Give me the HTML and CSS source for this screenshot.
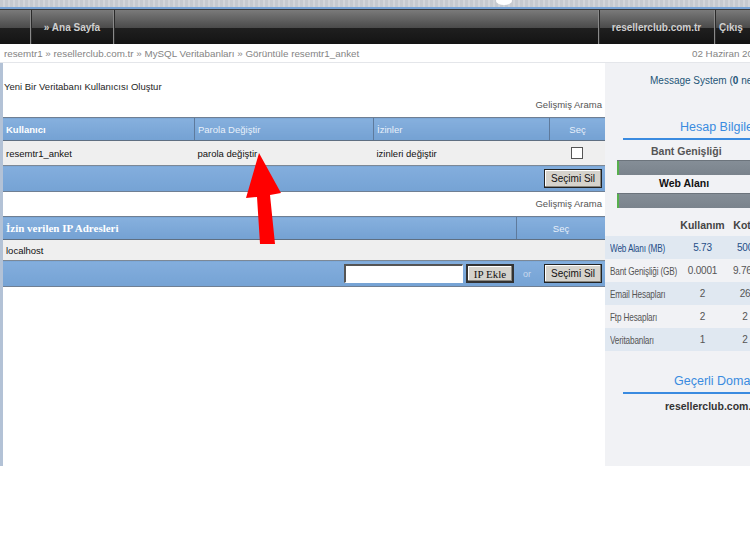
FILE: index.html
```html
<!DOCTYPE html>
<html lang="tr">
<head>
    <meta charset="UTF-8">
    <meta name="viewport" content="width=device-width, initial-scale=1.0">
    <title>Veritabanı Kullanıcısı</title>
    <link rel="stylesheet" href="styles.css">
</head>
<body>
<div class="page">

    <div class="topstrip"><span class="logo-blob"></span></div>

    <div class="navbar">
        <div class="nav-cell nav-empty"></div>
        <div class="nav-cell nav-home">&raquo; Ana Sayfa</div>
        <div class="nav-cell nav-fill"></div>
        <div class="nav-cell nav-site">resellerclub.com.tr</div>
        <div class="nav-cell nav-exit">Çıkış</div>
    </div>

    <div class="crumbs">
        <span>resemtr1 &raquo; resellerclub.com.tr &raquo; MySQL Veritabanları &raquo; Görüntüle resemtr1_anket</span>
        <span class="date">02 Haziran 2012</span>
    </div>

    <div class="main">
        <!-- Sol taraf: kullanıcı ve IP tabloları -->
        <div class="content">
            <div class="create-link">Yeni Bir Veritabanı Kullanıcısı Oluştur</div>
            <div class="search-link">Gelişmiş Arama</div>

            <table class="list">
                <tr class="head">
                    <th class="c-user strong">Kullanıcı</th>
                    <th class="c-pass">Parola Değiştir</th>
                    <th class="c-perm">İzinler</th>
                    <th class="c-sel">Seç</th>
                </tr>
                <tr class="row">
                    <td>resemtr1_anket</td>
                    <td>parola değiştir</td>
                    <td>izinleri değiştir</td>
                    <td class="center"><span class="checkbox"></span></td>
                </tr>
                <tr class="foot">
                    <td colspan="4" class="right"><button class="btn">Seçimi Sil</button></td>
                </tr>
            </table>

            <div class="search-link">Gelişmiş Arama</div>

            <table class="list">
                <tr class="head">
                    <th class="c-ip serif">İzin verilen IP Adresleri</th>
                    <th class="c-sel">Seç</th>
                </tr>
                <tr class="row short">
                    <td colspan="2">localhost</td>
                </tr>
                <tr class="foot">
                    <td colspan="2" class="right">
                        <div class="ip-form">
                            <input type="text" class="ip-input">
                            <button class="btn btn-serif">IP Ekle</button>
                            <span class="or">or</span>
                            <button class="btn">Seçimi Sil</button>
                        </div>
                    </td>
                </tr>
            </table>
        </div>

        <!-- Sağ taraf: hesap bilgileri -->
        <div class="side">
            <div class="msg">Message System (<b>0</b> new messages)</div>

            <div class="side-title">Hesap Bilgileri</div>
            <div class="bar-label">Bant Genişliği</div>
            <div class="bar"><span class="bar-fill"></span></div>
            <div class="bar-label dark">Web Alanı</div>
            <div class="bar second"><span class="bar-fill"></span></div>

            <table class="usage">
                <tr class="usage-head">
                    <th class="u-label"></th>
                    <th class="u-used">Kullanım</th>
                    <th class="u-quota">Kota</th>
                </tr>
                <tr class="alt first">
                    <td><span class="narrow">Web Alanı (MB)</span></td>
                    <td>5.73</td>
                    <td>500</td>
                </tr>
                <tr>
                    <td><span class="narrow">Bant Genişliği (GB)</span></td>
                    <td>0.0001</td>
                    <td>9.765</td>
                </tr>
                <tr class="alt">
                    <td><span class="narrow">Email Hesapları</span></td>
                    <td>2</td>
                    <td>26</td>
                </tr>
                <tr>
                    <td><span class="narrow">Ftp Hesapları</span></td>
                    <td>2</td>
                    <td>2</td>
                </tr>
                <tr class="alt">
                    <td><span class="narrow">Veritabanları</span></td>
                    <td>1</td>
                    <td>2</td>
                </tr>
            </table>

            <div class="side-title domains">Geçerli Domainler</div>
            <div class="domain">resellerclub.com.tr</div>
        </div>
    </div>

    <svg class="arrow" width="50" height="100" viewBox="0 0 50 100">
        <polygon points="19,3 41,43 30,45 35,94 20,94 17,47 6,48" fill="#ff0000"/>
    </svg>

</div>
</body>
</html>
```

FILE: styles.css
```css
body {
    margin: 0;
    width: 750px;
    height: 545px;
    overflow: hidden;
    background-color: #ffffff;
    font-family: 'Liberation Sans', Arial, sans-serif;
    font-size: 9.5px;
    color: #1e1e1e;
}

.page {
    position: relative;
    width: 800px;
}

.topstrip {
    position: relative;
    height: 7px;
    background: repeating-linear-gradient(90deg, #c6cad0 0, #c6cad0 3px, #d2d5da 3px, #d2d5da 5px);
    border-bottom: 2px solid #77a3d6;
}

.logo-blob {
    position: absolute;
    left: 496px;
    top: -3px;
    width: 16px;
    height: 8px;
    border-radius: 50%;
    background-color: #ffffff;
}

.navbar {
    display: flex;
    height: 34px;
    border-top: 1px solid #3b3b3b;
    background: linear-gradient(#7a7a7a, #4b4b4b 52%, #1f1f1f 54%, #141414);
}

.nav-cell {
    display: flex;
    align-items: center;
    justify-content: center;
    border-right: 1px solid #8a8a8a;
    box-shadow: 1px 0 0 #2a2a2a;
    font-size: 10px;
    font-weight: bold;
    color: #cfcfcf;
}

.nav-empty { width: 30px; }
.nav-home { width: 82px; }
.nav-fill { width: 484px; }
.nav-site { width: 115px; }
.nav-exit { flex: 1; justify-content: flex-start; padding-left: 4px; border-right: none; box-shadow: none; }

.crumbs {
    display: flex;
    justify-content: space-between;
    align-items: center;
    height: 18px;
    padding: 0 0 0 4px;
    border-bottom: 1px solid #e4e6ea;
    color: #848484;
    font-size: 9.8px;
    white-space: nowrap;
}

.crumbs .date {
    width: 108px;
}

.main {
    display: flex;
    height: 403px;
}

.content {
    width: 603px;
    border-left: 3px solid #b3c2d6;
}

.create-link {
    padding: 18px 0 0 1px;
    height: 12px;
    line-height: 12px;
}

.search-link {
    text-align: right;
    padding: 6px 3px 0 0;
    margin-bottom: 6px;
    height: 12px;
    line-height: 12px;
    color: #555555;
}

table.list {
    width: 602px;
    table-layout: fixed;
    border-collapse: collapse;
}

.list th, .list td {
    padding: 0 0 0 3px;
    text-align: left;
    white-space: nowrap;
}

.list .head th {
    height: 22px;
    background: linear-gradient(#86b0de, #74a1d3);
    border-top: 1px solid #6f7f93;
    border-bottom: 1px solid #5f6f82;
    border-left: 1px solid #5e7a9c;
    color: #e8f0fa;
    font-weight: normal;
}

.list .head th:first-child {
    border-left: none;
}

.list .head th.strong {
    font-weight: bold;
    color: #ffffff;
}

.list .head th.serif {
    font-family: 'Liberation Serif', 'Times New Roman', serif;
    font-size: 11px;
    font-weight: bold;
    color: #ffffff;
}

.c-user { width: 188px; }
.c-pass { width: 175px; }
.c-perm { width: 172px; }
.c-ip { width: 510px; }
.list .head th.c-sel { text-align: center; padding: 0; }

.list .row td {
    height: 24px;
    background-color: #efefef;
    border-bottom: 1px solid #7c8896;
    color: #111111;
}

.list .row.short td {
    height: 20px;
}

.list .foot td {
    height: 25px;
    background: linear-gradient(#83aedd, #75a2d4);
    border-bottom: 1px solid #6f7f93;
    padding-right: 3px;
}

.list td.center { text-align: center; padding: 0; }
.list td.right { text-align: right; }

.checkbox {
    display: inline-block;
    width: 10px;
    height: 10px;
    border: 1px solid #555555;
    background-color: #ffffff;
    vertical-align: middle;
}

.btn {
    height: 19px;
    padding: 0 6px;
    background-color: #d6d3cc;
    border: 1px solid #222222;
    box-shadow: inset -1px -1px 0 #8a877f, inset 1px 1px 0 #ffffff;
    font-family: 'Liberation Sans', Arial, sans-serif;
    font-size: 10px;
    color: #111111;
    vertical-align: middle;
}

.btn-serif {
    font-family: 'Liberation Serif', 'Times New Roman', serif;
    font-size: 11px;
    font-weight: normal;
    padding: 0 6px;
    border: 2px solid #333333;
}

.ip-form {
    display: flex;
    justify-content: flex-end;
    align-items: center;
    gap: 3px;
}

.ip-input {
    width: 114px;
    height: 14px;
    padding: 1px;
    border: 1px solid #ffffff;
    border-top: 2px solid #555555;
    border-left: 2px solid #555555;
    background-color: #ffffff;
}

.or {
    color: #c9daee;
    margin: 0 10px 0 6px;
    font-size: 9px;
}

.side {
    flex: 1;
    background-color: #f1f2f5;
    padding-top: 12px;
    white-space: nowrap;
}

.msg {
    padding-left: 45px;
    color: #245577;
    font-size: 10px;
    height: 14px;
}

.side-title {
    margin: 31px 0 0 18px;
    padding: 0 0 4px 57px;
    border-bottom: 2px solid #3a8be0;
    color: #3a8be0;
    font-size: 12.5px;
}

.bar-label {
    padding: 5px 0 0 46px;
    height: 12px;
    color: #555555;
    font-weight: bold;
    font-size: 10.5px;
}

.bar-label.dark {
    padding: 2px 0 0 54px;
    height: 14px;
    color: #111111;
}

.bar {
    height: 14px;
    margin: 3px 0 0 12px;
    background: linear-gradient(#858e97, #7a838c);
    border-top: 1px solid #6c747c;
}

.bar.second {
    margin-top: 2px;
}

.bar-fill {
    display: block;
    width: 2px;
    height: 14px;
    background-color: #57b04d;
}

table.usage {
    width: 160px;
    margin-top: 6px;
    table-layout: fixed;
    border-collapse: collapse;
}

.u-label { width: 75px; }
.u-used { width: 45px; }
.u-quota { width: 40px; }

.usage th {
    height: 22px;
    padding: 0;
    font-size: 10.5px;
    color: #444444;
    text-align: center;
}

.usage td {
    height: 23px;
    padding: 0;
    color: #555555;
    font-size: 10px;
    letter-spacing: -0.2px;
    text-align: center;
}

.usage td:first-child {
    text-align: left;
    padding-left: 5px;
}

.narrow {
    display: inline-block;
    font-size: 10.5px;
    transform: scaleX(0.78);
    transform-origin: left center;
}

.usage tr.alt td {
    background-color: #e0e8f1;
}

.usage tr.first td {
    color: #1f4e88;
}

.side-title.domains {
    margin-top: 23px;
    padding-left: 51px;
}

.domain {
    padding: 6px 0 0 60px;
    font-weight: bold;
    font-size: 10.5px;
    color: #333333;
}

.arrow {
    position: absolute;
    left: 240px;
    top: 150px;
}
```
